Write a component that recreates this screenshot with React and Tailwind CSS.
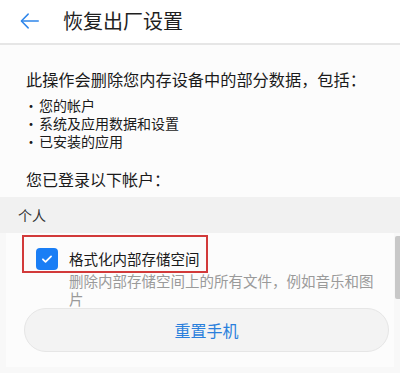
const bullets = ['您的帐户', '系统及应用数据和设置', '已安装的应用'];

export default function App() {
  return (
    <div
      className="relative h-[373px] w-[400px] overflow-hidden bg-white text-[#1a1a1a]"
      style={{ fontFamily: '"Noto Sans CJK SC", "Noto Sans", sans-serif' }}
    >
      <header className="flex h-[45px] items-center border-b-2 border-[#e6e6e6] pb-[2px]">
        <svg className="ml-[19px] h-[22px] w-[22px]" viewBox="0 0 24 24" fill="none" stroke="#2f86ea" strokeWidth="1.6" strokeLinecap="round" strokeLinejoin="round">
          <path d="M21 12H3" />
          <path d="M10 4.5L2.6 12l7.4 7.5" />
        </svg>
        <h1 className="ml-[22px] text-[20px] leading-[24px] text-[#1f1f1f]">恢复出厂设置</h1>
      </header>

      <section className="bg-[#fcfcfc] px-[26px] pt-[23px] pb-[7px]">
        <p className="text-[16.2px] leading-[22px]">此操作会删除您内存设备中的部分数据，包括：</p>
        <ul className="mt-[6px] -ml-[2px] flex flex-col text-[14px]">
          {bullets.map((b) => (
            <li key={b} className="flex h-[18px] items-center leading-[18px]">
              <span className="mr-[1px]">·</span>
              <span>{b}</span>
            </li>
          ))}
        </ul>
        <p className="mt-[18px] text-[16px] leading-[22px]">您已登录以下帐户：</p>
      </section>

      <div className="flex h-[36px] items-center bg-[#f1f1f1] pl-[18px] text-[14px] text-[#333]">个人</div>

      <section className="relative h-[140px] bg-[#f8f8f8] px-[6px]">
        <div className="h-[134px] bg-[#fcfcfc]">
          <div className="flex items-center pt-[15px] pl-[30px]">
            <span className="flex h-[22px] w-[22px] items-center justify-center rounded-[4px] bg-[#1a7ef5]">
              <svg className="h-[14px] w-[14px]" viewBox="0 0 24 24" fill="none" stroke="white" strokeWidth="3" strokeLinecap="round" strokeLinejoin="round">
                <path d="M5 12.5l4.5 4.5L19 7.5" />
              </svg>
            </span>
            <span className="ml-[11px] text-[14.5px] leading-[20px] text-[#1a1a1a]">格式化内部存储空间</span>
          </div>
          <p className="mt-[2px] box-content w-[312px] pl-[63px] text-[14.5px] leading-[18px] text-[#9a9a9a]">
            删除内部存储空间上的所有文件，例如音乐和图片
          </p>
          <button className="ml-[18px] flex h-[44px] w-[365px] items-center justify-center rounded-full border border-[#e6e6e6] bg-[#f3f3f3] text-[16px] text-[#2a7fdc]">
            重置手机
          </button>
        </div>
        <div className="absolute left-[22px] top-[2px] h-[38px] w-[186px] border-2 border-[#d23a3a]" />
        <div className="absolute right-0 top-[3px] h-[63px] w-[5px] rounded-l-[2px] bg-[#c8c8c8]" />
      </section>
    </div>
  );
}
